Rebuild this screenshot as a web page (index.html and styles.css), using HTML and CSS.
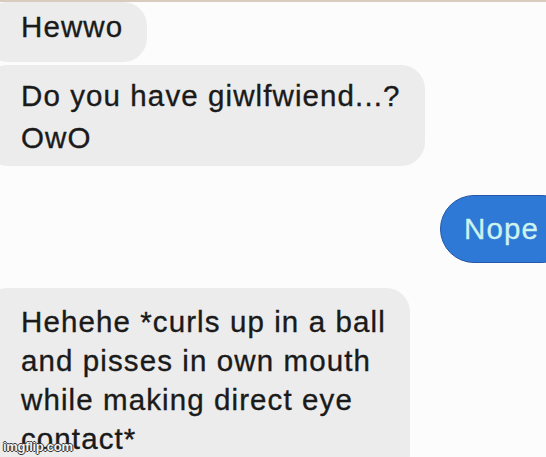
FILE: index.html
```html
<!DOCTYPE html>
<html>
<head>
<meta charset="utf-8">
<link rel="stylesheet" href="styles.css">
</head>
<body>
<div class="chat">
  <div class="bubble in first">Hewwo</div>
  <div class="bubble in second">Do you have giwlfwiend...?<br>OwO</div>
  <div class="bubble out">Nope</div>
  <div class="bubble in third">Hehehe *curls up in a ball<br>and pisses in own mouth<br>while making direct eye<br>contact*</div>
</div>
<div class="watermark">imgflip.com</div>
</body>
</html>
```

FILE: styles.css
```css
html, body {
  margin: 0;
  padding: 0;
}
body {
  width: 546px;
  height: 457px;
  overflow: hidden;
  background: #fcfcfc;
  border-top: 2px solid #d8ccbf;
  box-sizing: border-box;
  position: relative;
  font-family: "Liberation Sans", Arial, sans-serif;
}
.chat {
  display: flex;
  flex-direction: column;
  align-items: flex-start;
  overflow: hidden;
  height: 455px;
}
.bubble {
  font-size: 29.5px;
  letter-spacing: 1.1px;
  line-height: 42px;
  color: #1a1a1a;
  -webkit-text-stroke: 0.35px #1a1a1a;
  border-radius: 24px;
  white-space: nowrap;
  flex-shrink: 0;
}
.in {
  background: #ececec;
  margin-left: -16px;
  padding-left: 37px;
  padding-right: 24px;
}
.first {
  padding-top: 4px;
  padding-bottom: 14px;
}
.second {
  margin-top: 3px;
  padding-top: 10px;
  padding-bottom: 7px;
}
.out {
  align-self: flex-end;
  margin-top: 29px;
  margin-right: -30px;
  background: #2e78d6;
  border: 1.5px solid #2558a8;
  color: #cdf3ef;
  -webkit-text-stroke: 0.3px #cdf3ef;
  padding: 12px 36px 12px 23px;
  border-radius: 34px;
}
.third {
  margin-top: 25px;
  line-height: 39px;
  padding-top: 14px;
  padding-bottom: 20px;
}
.watermark {
  position: absolute;
  left: 3px;
  bottom: 3px;
  font-family: "Liberation Sans", Arial, sans-serif;
  font-size: 13px;
  font-weight: bold;
  letter-spacing: -0.3px;
  color: #f4f4f4;
  text-shadow: -1px 0 #333, 1px 0 #333, 0 -1px #333, 0 1px #333;
}
```
